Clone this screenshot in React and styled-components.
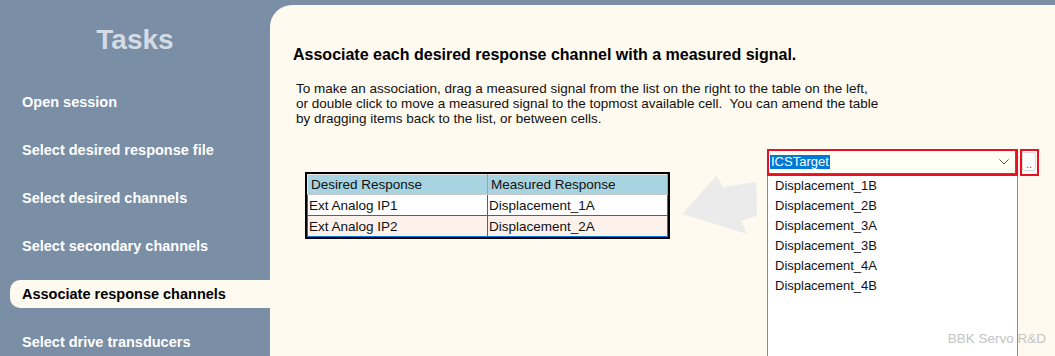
import React from 'react';
import styled, { createGlobalStyle } from 'styled-components';

const GlobalStyle = createGlobalStyle`
  html, body {
    margin: 0;
    padding: 0;
    background: #7a8ea5;
    font-family: "Liberation Sans", Arial, sans-serif;
  }
`;

const Page = styled.div`
  display: flex;
  width: 1055px;
  height: 356px;
  overflow: hidden;
  background: #7a8ea5;
`;

const Sidebar = styled.div`
  width: 270px;
  flex-shrink: 0;
  display: flex;
  flex-direction: column;
`;

const SideTitle = styled.h1`
  margin: 24px 0 22px;
  height: 32px;
  line-height: 32px;
  text-align: center;
  font-size: 28px;
  font-weight: bold;
  color: #d3dbe5;
`;

const MenuItem = styled.div`
  height: 48px;
  flex-shrink: 0;
  display: flex;
  align-items: center;
  padding-left: 10px;
`;

const MenuLabel = styled.div`
  flex: 1;
  height: 28px;
  display: flex;
  align-items: center;
  padding-left: 12px;
  border-radius: 10px 0 0 10px;
  font-size: 14.5px;
  font-weight: bold;
  color: ${p => (p.$active ? '#000' : '#fff')};
  background: ${p => (p.$active ? '#fffaf0' : 'transparent')};
`;

const Panel = styled.div`
  position: relative;
  flex: 1;
  margin-top: 5px;
  background: #fffaf0;
  border-top-left-radius: 22px;
  padding: 41px 0 0 23px;
`;

const Heading = styled.h2`
  margin: 0;
  font-size: 16px;
  line-height: 18px;
  font-weight: bold;
  color: #000;
`;

const Intro = styled.p`
  margin: 17px 0 0 3px;
  font-size: 13.5px;
  line-height: 15px;
  color: #111;
`;

const WorkArea = styled.div`
  display: flex;
  align-items: flex-start;
  margin-top: 23px;
`;

const TableBox = styled.div`
  margin: 23px 0 0 12px;
  border: 2px solid #000;
  background: #fff;
`;

const Grid = styled.table`
  border-collapse: collapse;
  font-size: 13.5px;
  color: #111;
`;

const HeadCell = styled.th`
  width: 180px;
  height: 20px;
  padding: 0 0 0 3px;
  text-align: left;
  font-weight: normal;
  background: #a8d3e0;
  border-top: 1px solid #e6e6e6;
  border-left: 1px solid #e6e6e6;
  border-right: 1px solid #9aa4aa;
  border-bottom: 1px solid #c8c8c8;
  box-sizing: border-box;
`;

const Cell = styled.td`
  height: 21px;
  padding: 0 0 0 1px;
  background: ${p => (p.$alt ? '#fdf1ec' : '#fff')};
  border: 1px solid #0078d7;
  box-sizing: border-box;
`;

const Arrow = styled.svg`
  margin: 26px 0 0 11px;
  flex-shrink: 0;
`;

const Picker = styled.div`
  margin-left: 8px;
  display: flex;
  flex-direction: column;
`;

const PickerRow = styled.div`
  display: flex;
  align-items: flex-start;
  gap: 2px;
`;

const Combo = styled.div`
  width: 251px;
  height: 27px;
  box-sizing: border-box;
  border: 2px solid #e81123;
  display: flex;
`;

const ComboField = styled.div`
  flex: 1;
  display: flex;
  align-items: center;
  justify-content: space-between;
  background: #fffff4;
  border-right: 1px solid #0078d7;
  border-bottom: 1px solid #0078d7;
  padding: 0 6px 0 1px;
`;

const Selected = styled.span`
  background: #0078d7;
  color: #fff;
  font-size: 13px;
  line-height: 14px;
  padding: 0 1px;
`;

const DotsFrame = styled.div`
  width: 19px;
  height: 27px;
  box-sizing: border-box;
  border: 2px solid #e81123;
  padding: 1px 1px 3px 0;
`;

const DotsButton = styled.div`
  height: 100%;
  box-sizing: border-box;
  background: #fdfdfd;
  border: 1px solid #d8d8d8;
  border-radius: 0 3px 3px 0;
  font-size: 11px;
  line-height: 22px;
  color: #555;
  text-align: center;
`;

const List = styled.div`
  width: 251px;
  height: 200px;
  box-sizing: border-box;
  background: #fff;
  border-left: 1px solid #8a8d92;
  border-right: 1px solid #8a8d92;
  padding: 0 0 0 7px;
`;

const ListItem = styled.div`
  height: 20px;
  line-height: 20px;
  font-size: 13px;
  color: #111;
`;

const Credit = styled.div`
  position: absolute;
  right: 9px;
  bottom: 10px;
  font-size: 13.5px;
  color: #c4c4c4;
`;

const tasks = [
  'Open session',
  'Select desired response file',
  'Select desired channels',
  'Select secondary channels',
  'Associate response channels',
  'Select drive transducers',
];

const rows = [
  ['Ext Analog IP1', 'Displacement_1A'],
  ['Ext Analog IP2', 'Displacement_2A'],
];

const signals = [
  'Displacement_1B',
  'Displacement_2B',
  'Displacement_3A',
  'Displacement_3B',
  'Displacement_4A',
  'Displacement_4B',
];

export default function App() {
  return (
    <>
      <GlobalStyle />
      <Page>
        <Sidebar>
          <SideTitle>Tasks</SideTitle>
          {tasks.map((t, i) => (
            <MenuItem key={t}>
              <MenuLabel $active={i === 4}>{t}</MenuLabel>
            </MenuItem>
          ))}
        </Sidebar>
        <Panel>
          <Heading>Associate each desired response channel with a measured signal.</Heading>
          <Intro>
            To make an association, drag a measured signal from the list on the right to the table on the left,<br />
            or double click to move a measured signal to the topmost available cell.&nbsp; You can amend the table<br />
            by dragging items back to the list, or between cells.
          </Intro>
          <WorkArea>
            <TableBox>
              <Grid>
                <thead>
                  <tr>
                    <HeadCell>Desired Response</HeadCell>
                    <HeadCell>Measured Response</HeadCell>
                  </tr>
                </thead>
                <tbody>
                  {rows.map((r, i) => (
                    <tr key={r[0]}>
                      <Cell $alt={i === 1}>{r[0]}</Cell>
                      <Cell $alt={i === 1}>{r[1]}</Cell>
                    </tr>
                  ))}
                </tbody>
              </Grid>
            </TableBox>
            <Arrow width="78" height="60" viewBox="0 0 78 60">
              <polygon
                points="1.3,39 35.3,0.7 42,12.3 75.3,6.7 76,40.7 60.3,45.7 66,59"
                fill="#ebebeb"
              />
            </Arrow>
            <Picker>
              <PickerRow>
                <Combo>
                  <ComboField>
                    <Selected>ICSTarget</Selected>
                    <svg width="10" height="6" viewBox="0 0 10 6">
                      <polyline points="0.5,0.5 5,5 9.5,0.5" fill="none" stroke="#555" strokeWidth="1" />
                    </svg>
                  </ComboField>
                </Combo>
                <DotsFrame>
                  <DotsButton>..</DotsButton>
                </DotsFrame>
              </PickerRow>
              <List>
                {signals.map(s => (
                  <ListItem key={s}>{s}</ListItem>
                ))}
              </List>
            </Picker>
          </WorkArea>
          <Credit>BBK Servo R&amp;D</Credit>
        </Panel>
      </Page>
    </>
  );
}
